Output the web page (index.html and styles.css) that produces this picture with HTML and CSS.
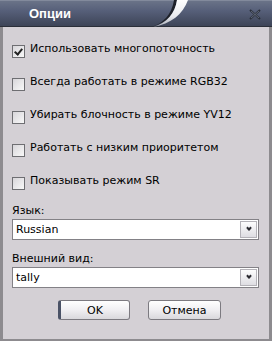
FILE: index.html
```html
<!DOCTYPE html>
<html lang="ru">
<head>
  <meta charset="UTF-8" />
  <title>Опции</title>
  <link rel="stylesheet" href="styles.css">
</head>
<body>
  <div class="window">
    <div class="titlebar">
      <span class="title">Опции</span>
      <svg class="swoosh" width="272" height="27" viewBox="0 0 272 27">
        <defs>
          <linearGradient id="sw" x1="0" y1="0" x2="0" y2="1">
            <stop offset="0" stop-color="#ffffff"/>
            <stop offset="0.6" stop-color="#e9eaee"/>
            <stop offset="1" stop-color="#a6abb6"/>
          </linearGradient>
        </defs>
        <path d="M151,27 C163,24 172,14 174,0 L177,0 C175,14 167,23 151,27 Z" fill="#1e2129"/>
        <path d="M153,27 C167,23 175,13 177,0 L188,0 C183,14 171,24 153,27 Z" fill="url(#sw)"/>
        <path d="M250,10 L260,19 M260,10 L250,19" stroke="#2b303b" stroke-width="2"/>
        <path d="M251,11 L259,18 M259,11 L251,18" stroke="#6b7384" stroke-width="0.8"/>
      </svg>
    </div>
    <div class="content">
      <div class="options">
        <label class="row"><span class="box checked"></span><span>Использовать многопоточность</span></label>
        <label class="row"><span class="box"></span><span>Всегда работать в режиме RGB32</span></label>
        <label class="row"><span class="box"></span><span>Убирать блочность в режиме YV12</span></label>
        <label class="row"><span class="box"></span><span>Работать с низким приоритетом</span></label>
        <label class="row"><span class="box"></span><span>Показывать режим SR</span></label>
      </div>
      <div class="field">
        <div class="field-label">Язык:</div>
        <div class="select"><span class="value">Russian</span><span class="drop"></span></div>
      </div>
      <div class="field">
        <div class="field-label">Внешний вид:</div>
        <div class="select"><span class="value">tally</span><span class="drop"></span></div>
      </div>
      <div class="buttons">
        <button class="btn default">OK</button>
        <button class="btn">Отмена</button>
      </div>
    </div>
  </div>
</body>
</html>
```

FILE: styles.css
```css
body {
  margin: 0;
  padding: 0;
  font-family: "DejaVu Sans", Verdana, sans-serif;
  font-size: 11px;
  color: #000;
  background: #d4d0d5;
}
.window {
  width: 272px;
  height: 341px;
  display: flex;
  flex-direction: column;
}
.titlebar {
  position: relative;
  height: 27px;
  flex: none;
  background: linear-gradient(#9aa1b0 0, #6a7388 1px, #57607a 40%, #3d4457 100%);
  border-bottom: 1px solid #2a2e38;
  box-sizing: border-box;
}
.title {
  position: absolute;
  left: 29px;
  top: 6px;
  color: #fff;
  font-family: "Liberation Sans", Arial, sans-serif;
  font-weight: bold;
  font-size: 13px;
}
.swoosh {
  position: absolute;
  left: 0;
  top: 0;
}
.content {
  flex: 1;
  background: #d4d0d5;
  border-left: 3px solid #8d8b8f;
  border-right: 3px solid #8d8b8f;
  border-bottom: 2px solid #8d8b8f;
  padding: 15px 10px 0 9px;
  display: flex;
  flex-direction: column;
}
.options {
  display: flex;
  flex-direction: column;
  gap: 17px;
}
.row {
  display: flex;
  align-items: flex-start;
  gap: 5px;
  line-height: 14px;
}
.box {
  width: 11px;
  height: 11px;
  margin-top: 3px;
  border: 1px solid #6e6e72;
  background: linear-gradient(135deg, #d8d6da, #f8f8f8);
  position: relative;
  flex: none;
}
.box.checked::after {
  content: "";
  position: absolute;
  left: 3px;
  top: 1px;
  width: 3px;
  height: 6px;
  border-right: 2px solid #222;
  border-bottom: 2px solid #222;
  transform: rotate(40deg);
}
.field {
  margin-top: 14px;
}
.field + .field {
  margin-top: 12px;
}
.field-label {
  line-height: 14px;
  margin-bottom: 1px;
}
.select {
  height: 19px;
  border: 1px solid #838186;
  background: #fff;
  display: flex;
  align-items: center;
  padding: 0 1px 0 3px;
}
.value {
  flex: 1;
}
.drop {
  width: 15px;
  height: 15px;
  border: 1px solid #b4b2b8;
  background: linear-gradient(#fdfdfd, #dedde2);
  position: relative;
}
.drop::after {
  content: "";
  position: absolute;
  left: 6px;
  top: 4px;
  width: 2px;
  height: 2px;
  border-right: 2px solid #2a2a30;
  border-bottom: 2px solid #2a2a30;
  transform: rotate(45deg);
}
.buttons {
  display: flex;
  gap: 18px;
  margin-top: 12px;
  padding-left: 46px;
}
.btn {
  font-family: "DejaVu Sans", Verdana, sans-serif;
  font-size: 11px;
  height: 20px;
  border: 1px solid #7c7a80;
  border-radius: 3px;
  background: linear-gradient(#ffffff, #f0eff2 50%, #d9d8dc);
  color: #000;
  padding: 0;
}
.btn.default {
  width: 72px;
  border-left: 3px solid #4a5266;
}
.btn + .btn {
  width: 73px;
}
```
